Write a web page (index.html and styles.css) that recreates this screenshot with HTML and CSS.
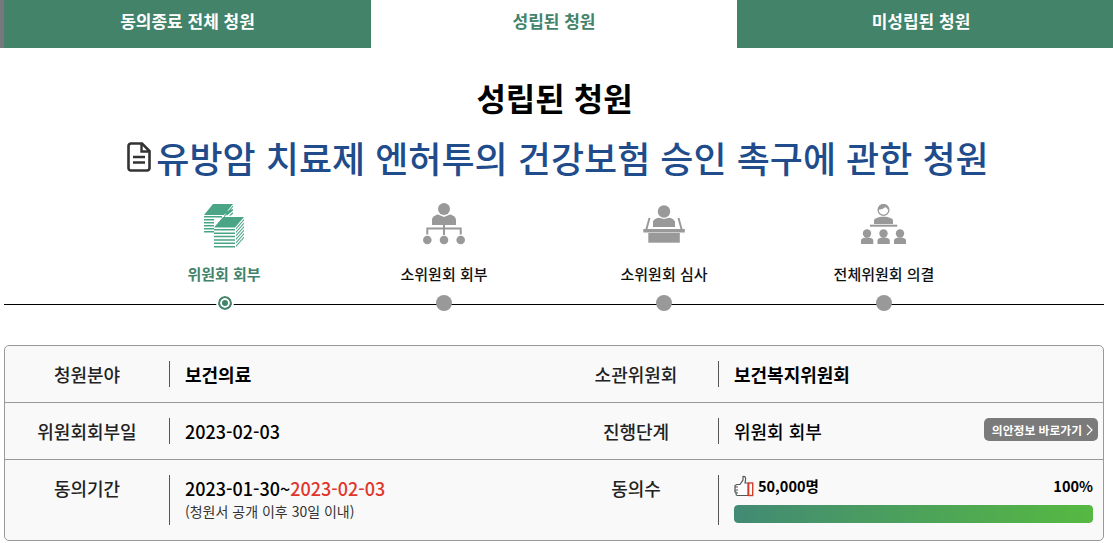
FILE: index.html
```html
<!DOCTYPE html>
<html lang="ko">
<head>
    <meta charset="UTF-8">
    <meta name="viewport" content="width=device-width, initial-scale=1.0">
    <title>성립된 청원</title>
    <link rel="stylesheet" href="styles.css">
</head>
<body>
<div class="tabs">
    <a class="tab tab_first">동의종료 전체 청원</a>
    <a class="tab tab_on">성립된 청원</a>
    <a class="tab tab_last">미성립된 청원</a>
</div>
<h1 class="page_title">성립된 청원</h1>
<h2 class="petition_title">
    <svg class="doc_icon" width="24" height="30" viewBox="0 0 24 30">
        <path d="M4 1.500H15L22.500 9V26a2.500 2.500 0 0 1-2.500 2.500H4A2.500 2.500 0 0 1 1.500 26V4A2.500 2.500 0 0 1 4 1.500Z" fill="none" stroke="#333" stroke-width="2.600"/>
        <path d="M14.500 2V9.500H22" fill="none" stroke="#333" stroke-width="2.400"/>
        <path d="M6 15H18M6 20.500H18" stroke="#333" stroke-width="2.600"/>
    </svg>유방암 치료제 엔허투의 건강보험 승인 촉구에 관한 청원
</h2>
<div class="steps">
    <div class="step step_on">
        <svg class="step_icon" width="44" height="48" viewBox="0 0 44 48">
            <g fill="#4aa587">
                <path d="M11 1H31L22 12H2Z"/>
                <path d="M2 13H20V14.500H2ZM2 16H12V17.500H2ZM2 19H12V20.500H2ZM2 22H12V23.500H2ZM2 25H12V26.500H2ZM2 28H12V29.500H2Z"/>
                <path d="M22 13L31 2.500V4L22 14.500ZM22 9L31 6V7.500L25 12.500ZM27 12.500L31 9V10.500L29 12.500Z"/>
                <path d="M21 14H42L33 24.500H12Z"/>
                <path d="M12 26H33V27.500H12ZM12 29.400H33V30.900H12ZM12 32.800H33V34.300H12ZM12 36.200H33V37.700H12ZM12 39.600H33V41.100H12ZM12 43H33V44.500H12Z"/>
                <path d="M34 25L42 16V17.500L34 26.500ZM34 28.500L42 19.500V21L34 30ZM34 32L42 23V24.500L34 33.500ZM34 35.500L42 26.500V28L34 37ZM34 39L42 30V31.500L34 40.500ZM34 42.500L42 33.500V35L34 44Z"/>
            </g>
        </svg>
        <span class="step_name">위원회 회부</span>
        <span class="dot"></span>
    </div>
    <div class="step">
        <svg class="step_icon" width="44" height="48" viewBox="0 0 44 48">
            <g fill="#999">
                <circle cx="22" cy="6" r="6"/>
                <path d="M10 22V17C10 14 13 12 16 11.500L22 14L28 11.500C31 12 34 14 34 17V22Z"/>
                <rect x="21" y="22" width="2" height="10"/>
                <path d="M4.300 31.500V24.500H39.700V31.500H37.700V26.500H6.300V31.500Z"/>
                <circle cx="5.300" cy="37" r="4.300"/>
                <circle cx="22" cy="37" r="4.300"/>
                <circle cx="38.700" cy="37" r="4.300"/>
            </g>
        </svg>
        <span class="step_name">소위원회 회부</span>
        <span class="dot"></span>
    </div>
    <div class="step">
        <svg class="step_icon" width="44" height="48" viewBox="0 0 44 48">
            <g fill="#999">
                <circle cx="22" cy="8.500" r="6.200"/>
                <path d="M11 24V19C11 17 14 15 17 14.700L22 16L27 14.700C30 15 33 17 33 19V24Z"/>
                <path d="M3.500 26L6.500 15H8.500L5.500 26ZM40.500 26L37.500 15H35.500L38.500 26Z"/>
                <rect x="1.300" y="26" width="41.500" height="3.500"/>
                <rect x="6.300" y="30" width="31.500" height="9.700"/>
            </g>
        </svg>
        <span class="step_name">소위원회 심사</span>
        <span class="dot"></span>
    </div>
    <div class="step">
        <svg class="step_icon" width="46" height="48" viewBox="0 0 46 48">
            <g fill="#999">
                <circle cx="22.500" cy="7" r="5.400" fill="none" stroke="#999" stroke-width="1.300"/>
                <path d="M17 7C17 3 19.500 1 22.500 1S28 3 28 7C26 6 25 4.500 24.500 4C23 5.500 20 6.500 17 7Z"/>
                <path d="M13 21V17.500C13 15.500 17 13.700 22.500 13.700S32 15.500 32 17.500V21Z"/>
                <rect x="9" y="21.700" width="27.300" height="2"/>
                <circle cx="6" cy="30.500" r="4.200"/>
                <path d="M0 41V37.500C0 35.500 2.500 34.500 6 34.500S12.300 35.500 12.300 37.500V41Z"/>
                <circle cx="22.500" cy="30.500" r="4.200"/>
                <path d="M16.500 41V37.500C16.500 35.500 19 34.500 22.500 34.500S28.800 35.500 28.800 37.500V41Z"/>
                <circle cx="39" cy="30.500" r="4.200"/>
                <path d="M33 41V37.500C33 35.500 35.500 34.500 39 34.500S45 35.500 45 37.500V41Z"/>
            </g>
        </svg>
        <span class="step_name">전체위원회 의결</span>
        <span class="dot"></span>
    </div>
</div>
<div class="info">
    <div class="info_row">
        <div class="info_label">청원분야</div>
        <div class="info_value"><b>보건의료</b></div>
        <div class="info_label">소관위원회</div>
        <div class="info_value"><b>보건복지위원회</b></div>
    </div>
    <div class="info_row">
        <div class="info_label">위원회회부일</div>
        <div class="info_value">2023-02-03</div>
        <div class="info_label">진행단계</div>
        <div class="info_value info_stage">
            <span>위원회 회부</span>
            <a class="bill_link">의안정보 바로가기
                <svg width="7" height="12" viewBox="0 0 7 12"><path d="M1 1L6 6L1 11" fill="none" stroke="#fff" stroke-width="1.200"/></svg>
            </a>
        </div>
    </div>
    <div class="info_row info_row_last">
        <div class="info_label">동의기간</div>
        <div class="info_value">
            <div>2023-01-30~<span class="end_date">2023-02-03</span></div>
            <div class="period_note">(청원서 공개 이후 30일 이내)</div>
        </div>
        <div class="info_label">동의수</div>
        <div class="info_value agree">
            <div class="agree_top">
                <span class="agree_count">
                    <svg width="20" height="22" viewBox="0 0 20 22">
                        <path d="M3 9.500H6L9 5V1.500C11 1 12 2.500 11.500 5L11 8H14V20.500H3.500C2.500 20.500 2 20 2 19V17H1V10.500Z" fill="#fff" stroke="#555" stroke-width="1.200"/>
                        <path d="M1 12H4M1 15H4M2 18H4" stroke="#555" stroke-width="1"/>
                        <rect x="14.700" y="8" width="4" height="12.500" fill="#fff" stroke="#d0402c" stroke-width="1.400"/>
                    </svg>50,000명
                </span>
                <span class="agree_rate">100%</span>
            </div>
            <div class="bar"><div class="bar_fill" style="width:100%"></div></div>
        </div>
    </div>
</div>
</body>
</html>
```

FILE: styles.css
```css
* {
    box-sizing: border-box;
    margin: 0;
    padding: 0;
}
body {
    font-family: "Noto Sans CJK KR", "Noto Sans", sans-serif;
    color: #111;
    background: #fff;
    overflow: hidden;
}
.tabs {
    display: flex;
    height: 48px;
}
.tab {
    display: flex;
    justify-content: center;
    align-items: center;
    height: 100%;
    padding-bottom: 8px;
    font-size: 17px;
    font-weight: 700;
    color: #fff;
    background: #428369;
}
.tab_first {
    width: 371px;
    border-left: 4px solid #77777f;
}
.tab_on {
    width: 366px;
    color: #428369;
    background: #fff;
}
.tab_last {
    flex: 1;
    padding-right: 8px;
}
.page_title {
    margin-top: 26px;
    padding-right: 4px;
    text-align: center;
    font-size: 32px;
    line-height: 46px;
    font-weight: 700;
    color: #000;
}
.petition_title {
    display: flex;
    justify-content: center;
    align-items: center;
    gap: 5px;
    margin-top: 12px;
    padding-left: 3px;
    font-size: 36px;
    line-height: 50px;
    font-weight: 500;
    color: #214c8c;
}
.steps {
    position: relative;
    display: flex;
    margin: 21px 9px 0 4px;
    padding: 0 110px;
    height: 142px;
}
.steps::after {
    content: "";
    position: absolute;
    left: 0;
    right: 0;
    top: 101px;
    height: 1px;
    background: #000;
}
.step {
    position: relative;
    z-index: 1;
    width: 220px;
    display: flex;
    flex-direction: column;
    align-items: center;
    font-size: 15px;
}
.step_icon {
    display: block;
    height: 48px;
}
.step_name {
    margin-top: 12px;
    line-height: 22px;
    font-weight: 500;
}
.step_on .step_name {
    color: #428369;
    font-weight: 700;
}
.dot {
    width: 16px;
    height: 16px;
    margin-top: 10px;
    border-radius: 50%;
    background: #999;
}
.step_on .dot {
    width: 14px;
    height: 14px;
    margin-top: 11px;
    margin-left: 2px;
    border: 2px solid #428369;
    background: #428369;
    box-shadow: inset 0 0 0 2px #fff;
    outline: 2px solid #fff;
}
.info {
    margin: 0 9px 0 4px;
    height: 196px;
    border: 1px solid #999;
    border-radius: 5px;
    background: #f9f9f9;
}
.info_row {
    display: grid;
    grid-template-columns: 164px 385px 164px 1fr;
    height: 57px;
    padding: 15px 0 0;
    border-bottom: 1px solid #999;
    font-size: 18px;
}
.info_row_last {
    height: 80px;
    border-bottom: 0;
}
.info_label {
    text-align: center;
    line-height: 26px;
    font-weight: 500;
    color: #222;
}
.info_value {
    height: 26px;
    padding-left: 15px;
    border-left: 1px solid #555;
    line-height: 26px;
    font-weight: 500;
    color: #000;
}
.info_value b {
    font-weight: 700;
}
.info_row_last .info_value {
    height: 50px;
}
.info_stage {
    display: flex;
    justify-content: space-between;
    align-items: center;
    padding-right: 5px;
}
.bill_link {
    display: flex;
    align-items: center;
    align-self: flex-start;
    gap: 4px;
    height: 23px;
    padding: 0 5px 0 8px;
    border-radius: 5px;
    background: #7b7b7b;
    color: #fff;
    font-size: 11.800px;
    font-weight: 700;
}
.end_date {
    color: #e0352b;
}
.period_note {
    font-size: 14px;
    line-height: 20px;
    font-weight: 400;
    color: #333;
}
.agree {
    padding-right: 10px;
}
.agree_top {
    display: flex;
    justify-content: space-between;
    align-items: center;
    height: 22px;
    font-size: 14.500px;
    font-weight: 700;
}
.agree_count {
    display: flex;
    align-items: center;
    gap: 4px;
}
.bar {
    margin-top: 8px;
    height: 18px;
    border-radius: 4px;
    background: #eee;
    overflow: hidden;
}
.bar_fill {
    height: 100%;
    border-radius: 4px;
    background: linear-gradient(90deg, #428a74, #56b941);
}
```
